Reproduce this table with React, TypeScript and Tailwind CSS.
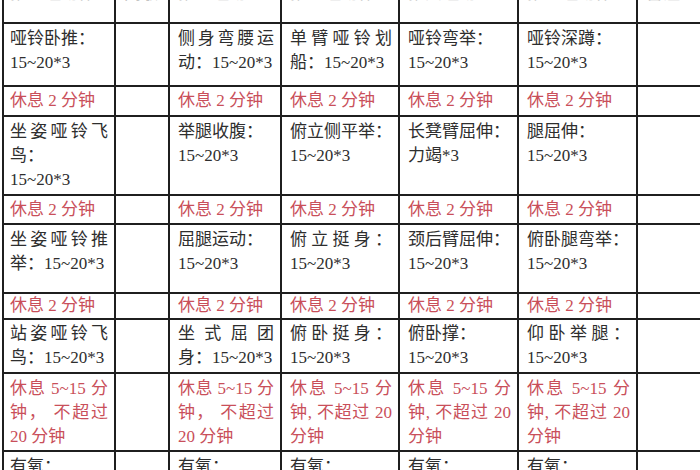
import React from 'react';

type Line = { t: string; j?: boolean };
type Row = { h: string; kind: 'head' | 'ex' | 'rest'; red?: boolean; cells: (Line[] | null)[] };

const l = (t: string): Line => ({ t });
const j = (t: string): Line => ({ t, j: true });

const rest = [l('休息 2 分钟')];

const rows: Row[] = [
  {
    h: 'h-[24px]',
    kind: 'head',
    cells: [[l('第一组动作')], [l('间歇')], [l('第二组动')], [l('第三组动作')], [l('第四组动')], [l('第五组动作')], [l('备注')]],
  },
  {
    h: 'h-[63px]',
    kind: 'ex',
    cells: [
      [l('哑铃卧推：'), l('15~20*3')],
      null,
      [j('侧身弯腰运'), l('动：15~20*3')],
      [j('单臂哑铃划'), l('船：15~20*3')],
      [l('哑铃弯举：'), l('15~20*3')],
      [l('哑铃深蹲：'), l('15~20*3')],
      null,
    ],
  },
  { h: 'h-[30px]', kind: 'rest', red: true, cells: [rest, null, rest, rest, rest, rest, null] },
  {
    h: 'h-[79px]',
    kind: 'ex',
    cells: [
      [j('坐姿哑铃飞'), l('鸟：'), l('15~20*3')],
      null,
      [l('举腿收腹：'), l('15~20*3')],
      [l('俯立侧平举：'), l('15~20*3')],
      [l('长凳臂屈伸：'), l('力竭*3')],
      [l('腿屈伸：'), l('15~20*3')],
      null,
    ],
  },
  { h: 'h-[29px]', kind: 'rest', red: true, cells: [rest, null, rest, rest, rest, rest, null] },
  {
    h: 'h-[69px]',
    kind: 'ex',
    cells: [
      [j('坐姿哑铃推'), l('举：15~20*3')],
      null,
      [l('屈腿运动：'), l('15~20*3')],
      [j('俯立挺身：'), l('15~20*3')],
      [l('颈后臂屈伸：'), l('15~20*3')],
      [l('俯卧腿弯举：'), l('15~20*3')],
      null,
    ],
  },
  { h: 'h-[25px]', kind: 'rest', red: true, cells: [rest, null, rest, rest, rest, rest, null] },
  {
    h: 'h-[55px]',
    kind: 'ex',
    cells: [
      [j('站姿哑铃飞'), l('鸟：15~20*3')],
      null,
      [j('坐式屈团'), l('身：15~20*3')],
      [j('俯卧挺身：'), l('15~20*3')],
      [l('俯卧撑：'), l('15~20*3')],
      [j('仰卧举腿：'), l('15~20*3')],
      null,
    ],
  },
  {
    h: 'h-[78px]',
    kind: 'ex',
    red: true,
    cells: [
      [j('休息 5~15 分'), j('钟， 不超过'), l('20 分钟')],
      null,
      [j('休息 5~15 分'), j('钟， 不超过'), l('20 分钟')],
      [j('休息 5~15 分'), j('钟, 不超过 20'), l('分钟')],
      [j('休息 5~15 分'), j('钟, 不超过 20'), l('分钟')],
      [j('休息 5~15 分'), j('钟, 不超过 20'), l('分钟')],
      null,
    ],
  },
  {
    h: 'h-[40px]',
    kind: 'ex',
    cells: [[l('有氧：')], null, [l('有氧：')], [l('有氧：')], [l('有氧：')], [l('有氧：')], null],
  },
];

function Cell({ lines, col, row }: { lines: Line[] | null; col: number; row: Row }) {
  const pad = col === 0 ? 'border-l-2 pl-[6px]' : 'pl-[8px]';
  const align = row.kind === 'rest' ? 'flex flex-col justify-center' : 'pt-[3px]';
  const color = row.kind === 'head' ? 'text-[#c4c4c4]' : row.red ? 'text-[#c94f5a]' : 'text-[#2e2e2e]';
  return (
    <div className={`border-r-2 border-b-2 border-[#1f1f1f] pr-[6px] ${pad} ${align} ${color}`}>
      {row.kind === 'head' ? (
        <div className="-mt-[21px] whitespace-nowrap">{lines?.[0].t}</div>
      ) : (
        lines?.map((ln, i) => (
          <div key={i} className={`whitespace-nowrap ${ln.j ? 'text-justify [text-align-last:justify]' : ''}`}>
            {ln.t}
          </div>
        ))
      )}
    </div>
  );
}

export default function App() {
  return (
    <div className="w-[700px] h-[470px] overflow-hidden bg-white">
      <div className="ml-[2px] w-[736px] text-[17px] leading-[24px] font-['Liberation_Serif','Noto_Sans_CJK_SC',serif]">
        {rows.map((row, r) => (
          <div key={r} className={`grid grid-cols-[114px_54px_112px_118px_119px_119px_100px] ${row.h}`}>
            {row.cells.map((c, i) => (
              <Cell key={i} lines={c} col={i} row={row} />
            ))}
          </div>
        ))}
      </div>
    </div>
  );
}
